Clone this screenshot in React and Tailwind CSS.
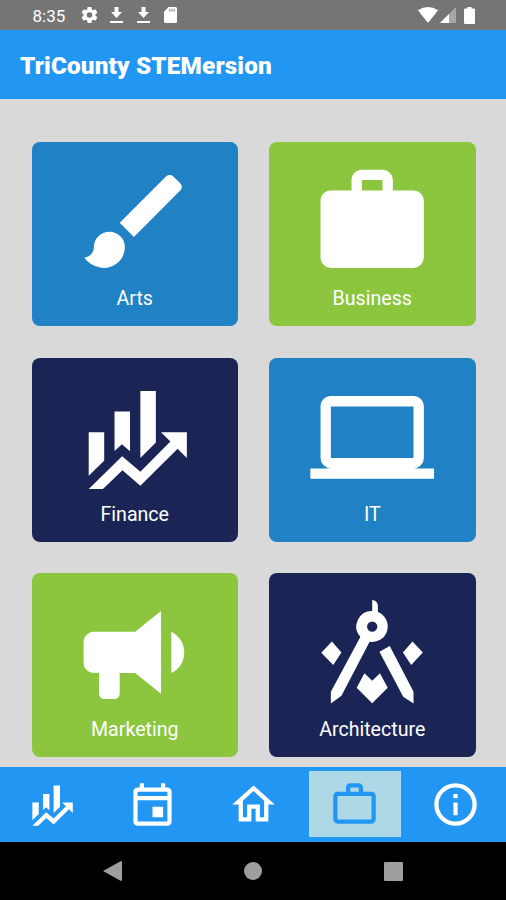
import React from "react";

const FINANCE =
  "M6,16.5L3,19.44V11H6M11,14.66L9.43,13.32L8,14.64V7H11M16,13L13,16V3H16M18.81,12.81L17,11H22V16L20.21,14.21L13,21.36L9.53,18.34L5.75,22H3L9.47,15.66L13,18.64";

const cards = [
  {
    label: "Arts",
    bg: "bg-[#2082c5]",
    d: "M20.71,4.63L19.37,3.29C19,2.9 18.35,2.9 17.96,3.29L9,12.25L11.75,15L20.71,6.04C21.1,5.65 21.1,5 20.71,4.63M7,14A3,3 0 0,0 4,17C4,18.31 2.84,19 2.16,19C2.92,20.22 4.5,21 6,21A4,4 0 0,0 10,17A3,3 0 0,0 7,14Z",
  },
  {
    label: "Business",
    bg: "bg-[#8cc63f]",
    d: "M10,2H14A2,2 0 0,1 16,4V6H20A2,2 0 0,1 22,8V19A2,2 0 0,1 20,21H4C2.89,21 2,20.1 2,19V8C2,6.89 2.89,6 4,6H8V4C8,2.89 8.89,2 10,2M14,6V4H10V6H14Z",
  },
  { label: "Finance", bg: "bg-[#1b2555]", d: FINANCE },
  {
    label: "IT",
    bg: "bg-[#2082c5]",
    d: "M4,6H20V16H4M20,18A2,2 0 0,0 22,16V6C22,4.89 21.1,4 20,4H4C2.89,4 2,4.89 2,6V16A2,2 0 0,0 4,18H0V20H24V18H20Z",
  },
  {
    label: "Marketing",
    bg: "bg-[#8cc63f]",
    d: "M12,8H4A2,2 0 0,0 2,10V14A2,2 0 0,0 4,16H5V20A1,1 0 0,0 6,21H8A1,1 0 0,0 9,20V16H12L17,20V4L12,8M21.5,12C21.5,13.71 20.54,15.26 19,16V8C20.53,8.75 21.5,10.3 21.5,12Z",
  },
  {
    label: "Architecture",
    bg: "bg-[#1b2555]",
    d: "M13.1,4.2V3C13.1,2.3 12.6,1.9 12,1.85V4A3,3 0 0,0 9.7,9L4,19.6V21.9L6.05,20.4L11.5,9.95A3,3 0 0,0 13.1,4.2M12,6A1,1 0 0,1 12,8A1,1 0 0,1 12,6M13.4,11.85L15.4,10.75L20,19.6V21.9L18,20.6ZM4.2,9.9L6.05,12L4.45,14.45L2.15,12.05ZM19.8,9.9L21.8,12L19.55,14.45L17.95,12ZM10.5,16.05L12,17.5L13.5,16.05L15,18.85L12,21.85L9,18.85Z",
  },
];

const tabs = [
  { name: "finance", d: FINANCE },
  {
    name: "calendar",
    d: "M19 4H18V2H16V4H8V2H6V4H5C3.89 4 3 4.9 3 6V20A2 2 0 0 0 5 22H19A2 2 0 0 0 21 20V6A2 2 0 0 0 19 4M19 20H5V10H19V20M19 8H5V6H19V8M12 13H17V18H12V13Z",
  },
  {
    name: "home",
    d: "M12 5.69L17 10.19V18H15V12H9V18H7V10.19L12 5.69M12 3L2 12H5V20H11V14H13V20H19V12H22L12 3",
  },
  {
    name: "careers",
    active: true,
    d: "M20,6C20.58,6 21.05,6.2 21.42,6.59C21.8,7 22,7.45 22,8V19C22,19.55 21.8,20 21.42,20.41C21.05,20.8 20.58,21 20,21H4C3.42,21 2.95,20.8 2.58,20.41C2.2,20 2,19.55 2,19V8C2,7.45 2.2,7 2.58,6.59C2.95,6.2 3.42,6 4,6H8V4C8,3.42 8.2,2.95 8.58,2.58C8.95,2.2 9.42,2 10,2H14C14.58,2 15.05,2.2 15.42,2.58C15.8,2.95 16,3.42 16,4V6H20M4,8V19H20V8H4M14,6V4H10V6H14Z",
  },
  {
    name: "info",
    d: "M11,9H13V7H11M12,20C7.59,20 4,16.41 4,12C4,7.59 7.59,4 12,4C16.41,4 20,7.59 20,12C20,16.41 16.41,20 12,20M12,2A10,10 0 0,0 2,12A10,10 0 0,0 12,22A10,10 0 0,0 22,12A10,10 0 0,0 12,2M11,17H13V11H11V17Z",
  },
];

function Glyph({ d, className, viewBox = "0 0 24 24" }) {
  return (
    <svg viewBox={viewBox} className={className} fill="currentColor" fillRule="evenodd">
      <path d={d} />
    </svg>
  );
}

function StatusBar() {
  const download = "M4.5 0H8.5V5H12L6.5 11L1 5H4.5ZM0 14H13V16H0Z";
  return (
    <div className="flex h-[30px] shrink-0 items-center bg-[#757575] pr-[31px] pl-[32.5px] text-white">
      <span className="w-[48px] pt-[2px] text-[17px] leading-none">8:35</span>
      <Glyph
        className="h-[16px] w-[17px]"
        viewBox="2 2 20 20"
        d="M12,15.5A3.5,3.5 0 0,1 8.5,12A3.5,3.5 0 0,1 12,8.5A3.5,3.5 0 0,1 15.5,12A3.5,3.5 0 0,1 12,15.5M19.43,12.97C19.47,12.65 19.5,12.33 19.5,12C19.5,11.67 19.47,11.34 19.43,11L21.54,9.37C21.73,9.22 21.78,8.95 21.66,8.73L19.66,5.27C19.54,5.05 19.27,4.96 19.05,5.05L16.56,6.05C16.04,5.66 15.5,5.32 14.87,5.07L14.5,2.42C14.46,2.18 14.25,2 14,2H10C9.75,2 9.54,2.18 9.5,2.42L9.13,5.07C8.5,5.32 7.96,5.66 7.44,6.05L4.95,5.05C4.73,4.96 4.46,5.05 4.34,5.27L2.34,8.73C2.21,8.95 2.27,9.22 2.46,9.37L4.57,11C4.53,11.34 4.5,11.67 4.5,12C4.5,12.33 4.53,12.65 4.57,12.97L2.46,14.63C2.27,14.78 2.21,15.05 2.34,15.27L4.34,18.73C4.46,18.95 4.73,19.03 4.95,18.95L7.44,17.94C7.96,18.34 8.5,18.68 9.13,18.93L9.5,21.58C9.54,21.82 9.75,22 10,22H14C14.25,22 14.46,21.82 14.5,21.58L14.87,18.93C15.5,18.67 16.04,18.34 16.56,17.94L19.05,18.95C19.27,19.03 19.54,18.95 19.66,18.73L21.66,15.27C21.78,15.05 21.73,14.78 21.54,14.63L19.43,12.97Z"
      />
      <Glyph className="ml-[12.5px] h-4 w-[13px]" viewBox="0 0 13 16" d={download} />
      <Glyph className="ml-[14px] h-4 w-[13px]" viewBox="0 0 13 16" d={download} />
      <svg viewBox="0 0 13 16" className="ml-[13.5px] h-4 w-[13px]">
        <path fill="#fff" d="M4.7 0H11.5Q13 0 13 1.5V14.5Q13 16 11.5 16H1.5Q0 16 0 14.5V4.7Z" />
        <path fill="#aaa" d="M5 1.8h1.5v3H5zM7.3 1.8h1.5v3H7.3zM9.6 1.8h1.5v3H9.6z" />
      </svg>
      <Glyph
        className="ml-auto h-4 w-[20px]"
        viewBox="0 0 20 16"
        d="M0 3.2Q10 -3 20 3.2L11 14.8Q10 16 9 14.8Z"
      />
      <svg viewBox="0 0 16 16" className="ml-[2px] h-4 w-4">
        <path fill="#a6a6a6" d="M16 0V16H0Z" />
        <path fill="#fff" d="M9 7V16H0Z" />
      </svg>
      <Glyph
        className="ml-[8px] h-[17px] w-[11px]"
        viewBox="0 0 11 17"
        d="M3.5 0H7.5V1.6H9.8Q11 1.6 11 2.8V15.8Q11 17 9.8 17H1.2Q0 17 0 15.8V2.8Q0 1.6 1.2 1.6H3.5Z"
      />
    </div>
  );
}

export default function App() {
  return (
    <div className="flex h-[900px] w-[506px] flex-col overflow-hidden bg-[#d9d9d9] font-[Roboto,sans-serif]">
      <StatusBar />
      <header className="flex h-[69px] shrink-0 items-center bg-[#2196f3] pt-[3px] pl-5">
        <h1 className="text-[24.3px] leading-none font-black tracking-[0.15px] whitespace-nowrap text-white">
          TriCounty STEMersion
        </h1>
      </header>

      <main className="grid min-h-0 flex-1 grid-cols-[206.5px_206.5px] content-start gap-x-[31px] gap-y-[31.5px] overflow-hidden pt-[43.2px] pl-[31.5px]">
        {cards.map((c) => (
          <section
            key={c.label}
            className={`flex h-[184px] flex-col items-center rounded-[8px] pt-[17px] text-white ${c.bg}`}
          >
            <Glyph d={c.d} className="h-[124px] w-[124px] shrink-0 translate-x-[0.2px] translate-y-[0.4px]" />
            <span className="mt-[4px] text-[19.6px] leading-6">{c.label}</span>
          </section>
        ))}
      </main>

      <nav className="grid h-[75px] shrink-0 grid-cols-5 bg-[#2196f3] pb-[1px] pl-[1px]">
        {tabs.map((t) => (
          <div key={t.name} className="flex items-center justify-center">
            <div
              className={`flex h-[66px] w-[92px] items-center justify-center ${
                t.active ? "bg-[#add8e6] text-[#2196f3]" : "text-white"
              }`}
            >
              <Glyph d={t.d} className="h-[51px] w-[51px]" />
            </div>
          </div>
        ))}
      </nav>

      <div className="flex h-[58px] shrink-0 items-center justify-between bg-black px-[103px] text-[#9e9e9e]">
        <Glyph className="h-[20px] w-[19px]" viewBox="0 0 19 20" d="M0 10L18 0Q19 0 19 1V19Q19 20 18 20Z" />
        <div className="h-[18px] w-[18px] rounded-full bg-[#9e9e9e]" />
        <div className="h-[19px] w-[19px] rounded-[1px] bg-[#9e9e9e]" />
      </div>
    </div>
  );
}
